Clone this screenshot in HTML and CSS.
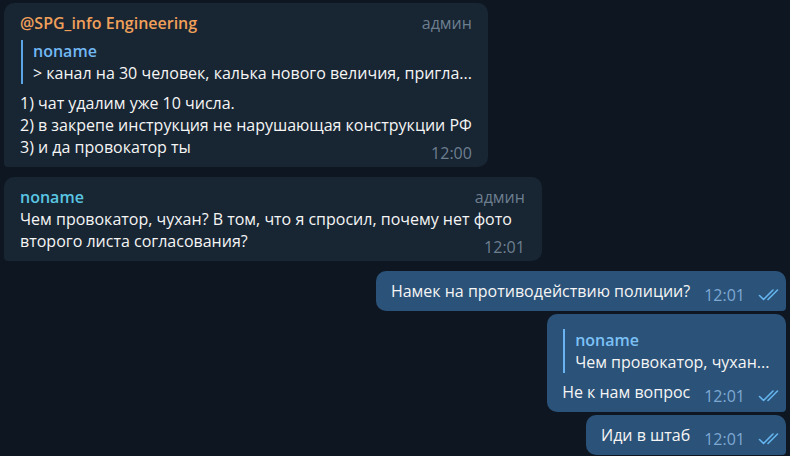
FILE: index.html
```html
<!DOCTYPE html>
<html lang="ru">
<head>
  <meta charset="UTF-8">
  <title>Chat</title>
  <link rel="stylesheet" href="styles.css">
</head>
<body>
  <div class="chat">

    <div class="msg in">
      <div class="head">
        <span class="name orange">@SPG_info Engineering</span>
        <span class="badge">админ</span>
      </div>
      <div class="reply">
        <div class="reply-name">noname</div>
        <div class="reply-text">&gt; канал на 30 человек, калька нового величия, пригла...</div>
      </div>
      <div class="body">
        <div class="text">1) чат удалим уже 10 числа.<br>2) в закрепе инструкция не нарушающая конструкции РФ<br>3) и да провокатор ты</div>
        <span class="time">12:00</span>
      </div>
    </div>

    <div class="msg in wide">
      <div class="head">
        <span class="name cyan">noname</span>
        <span class="badge">админ</span>
      </div>
      <div class="body">
        <div class="text">Чем провокатор, чухан? В том, что я спросил, почему нет фото<br>второго листа согласования?</div>
        <span class="time">12:01</span>
      </div>
    </div>

    <div class="msg out first">
      <div class="row">
        <div class="text">Намек на противодействию полиции?</div>
        <span class="time">12:01</span>
        <svg class="check" viewBox="0 0 22 12" width="22" height="12"><path d="M1.5 6.5l4 4 9.5-9.5M10 10.5l9.5-9.5" fill="none" stroke="currentColor" stroke-width="1.6" stroke-linecap="round" stroke-linejoin="round"/></svg>
      </div>
    </div>

    <div class="msg out">
      <div class="reply">
        <div class="reply-name">noname</div>
        <div class="reply-text">Чем провокатор, чухан...</div>
      </div>
      <div class="row">
        <div class="text">Не к нам вопрос</div>
        <span class="time">12:01</span>
        <svg class="check" viewBox="0 0 22 12" width="22" height="12"><path d="M1.5 6.5l4 4 9.5-9.5M10 10.5l9.5-9.5" fill="none" stroke="currentColor" stroke-width="1.6" stroke-linecap="round" stroke-linejoin="round"/></svg>
      </div>
    </div>

    <div class="msg out">
      <div class="row">
        <div class="text">Иди в штаб</div>
        <span class="time">12:01</span>
        <svg class="check" viewBox="0 0 22 12" width="22" height="12"><path d="M1.5 6.5l4 4 9.5-9.5M10 10.5l9.5-9.5" fill="none" stroke="currentColor" stroke-width="1.6" stroke-linecap="round" stroke-linejoin="round"/></svg>
      </div>
    </div>

  </div>
</body>
</html>
```

FILE: styles.css
```css
* {
  margin: 0;
  padding: 0;
  box-sizing: border-box;
}

body {
  background: #0e1621;
  font-family: 'Open Sans', 'DejaVu Sans', sans-serif;
  font-size: 16px;
  line-height: 22px;
  color: #f5f5f5;
  height: 456px;
  overflow: hidden;
}

.chat {
  display: flex;
  flex-direction: column;
  padding: 3px 4px 0 4px;
}

.msg {
  border-radius: 10px;
}

.msg.in {
  align-self: flex-start;
  background: #182533;
  padding: 9px 16px 9px 16px;
  margin-bottom: 10px;
  border-bottom-left-radius: 4px;
}

.msg.in.wide {
  padding-right: 17px;
}

.wide .text {
  padding-right: 13px;
}

.msg.out {
  align-self: flex-end;
  background: #2b5278;
  padding: 9px 6px 9px 15px;
  margin-bottom: 3px;
  border-bottom-right-radius: 4px;
}

.head {
  display: flex;
  justify-content: space-between;
  align-items: baseline;
  gap: 30px;
}

.name {
  font-weight: 600;
}

.orange {
  color: #f0a05a;
}

.cyan {
  color: #5ac6e2;
}

.badge {
  color: #6d7f8f;
}

.reply {
  border-left: 2px solid #5aa5e6;
  padding-left: 10px;
  margin: 6px 0 8px 1px;
}

.reply-name {
  color: #72b8f3;
  font-weight: 600;
}

.msg.out .reply {
  border-left-color: #6ab3f3;
}

.msg.out .reply-name {
  color: #7cc1f6;
}

.body {
  display: grid;
}

.body .text,
.body .time {
  grid-area: 1 / 1;
}

.body .time {
  justify-self: end;
  align-self: end;
  line-height: 10px;
}

.time {
  color: #6d7f8f;
}

.row {
  display: flex;
  align-items: flex-end;
}

.row .time {
  color: #7da8d3;
  margin-left: 14px;
  line-height: 14px;
}

.check {
  color: #64b5ef;
  margin: 0 0 1px 13px;
}
```
